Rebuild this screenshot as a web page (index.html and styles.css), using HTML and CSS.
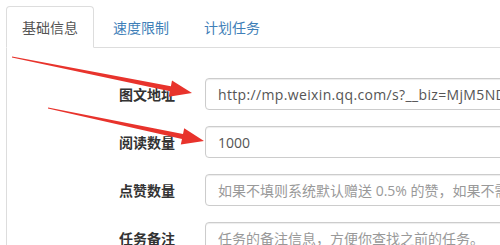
FILE: index.html
```html
<!DOCTYPE html>
<html lang="zh-CN">
<head>
  <meta charset="UTF-8">
  <meta name="viewport" content="width=device-width, initial-scale=1.0">
  <title>添加任务</title>
  <link rel="stylesheet" href="styles.css">
</head>
<body>
  <div class="page">
    <ul class="tabs">
      <li class="tab tab--active"><a href="#">基础信息</a></li>
      <li class="tab"><a href="#">速度限制</a></li>
      <li class="tab"><a href="#">计划任务</a></li>
    </ul>

    <div class="tab-content">
      <form class="form">
        <div class="form-row">
          <label class="form-label">图文地址</label>
          <div class="form-field">
            <input class="form-input form-input--url" type="text" value="http://mp.weixin.qq.com/s?__biz=MjM5NDI2MDk5Mw==&amp;mid=2651">
          </div>
        </div>

        <div class="form-row">
          <label class="form-label">阅读数量</label>
          <div class="form-field">
            <input class="form-input" type="text" value="1000">
          </div>
        </div>

        <div class="form-row">
          <label class="form-label">点赞数量</label>
          <div class="form-field">
            <input class="form-input" type="text" placeholder="如果不填则系统默认赠送 0.5% 的赞，如果不需要请填 0">
          </div>
        </div>

        <div class="form-row">
          <label class="form-label">任务备注</label>
          <div class="form-field">
            <input class="form-input" type="text" placeholder="任务的备注信息，方便你查找之前的任务。">
          </div>
        </div>
      </form>
    </div>

    <!-- Annotation arrows drawn over the form -->
    <svg class="arrows" width="500" height="245" viewBox="0 0 500 245">
      <polygon points="12.1,56.4 170.9,86.2 172,80.6 192,93 168.8,96.8 169.9,91.2 11.9,57.6"/>
      <polygon points="48.1,107.4 183,133.9 184.2,128.3 204,141 180.8,144.5 182,138.9 47.9,108.6"/>
    </svg>
  </div>
</body>
</html>
```

FILE: styles.css
```css
* {
  margin: 0;
  padding: 0;
  box-sizing: border-box;
}

body {
  width: 500px;
  height: 245px;
  overflow: hidden;
  background-color: #fff;
  font-family: "Open Sans", "Noto Sans CJK SC", sans-serif;
  font-size: 14px;
  color: #333;
}

.page {
  position: relative;
  width: 760px;
  padding: 6px 0 0 6px;
}

/* Tabs */
.tabs {
  display: flex;
  list-style: none;
  border-bottom: 1px solid #ddd;
}

.tab {
  margin-right: 3px;
  margin-bottom: -1px;
}

.tab a {
  display: block;
  padding: 10px 15px;
  line-height: 20px;
  border: 1px solid transparent;
  border-radius: 4px 4px 0 0;
  color: #3f7fb8;
  text-decoration: none;
  font-family: "Noto Sans CJK SC", sans-serif;
}

.tab--active a {
  color: #555;
  background-color: #fff;
  border-color: #ddd #ddd transparent;
}

/* Panel */
.tab-content {
  border-left: 1px solid #ddd;
  padding-top: 30px;
  height: 200px;
}

.form-row {
  display: flex;
  align-items: center;
  margin-bottom: 16px;
}

.form-label {
  width: 183px;
  padding-right: 15px;
  text-align: right;
  font-family: "Noto Sans CJK SC", sans-serif;
  font-weight: bold;
  font-size: 14px;
  color: #333;
}

.form-field {
  flex: 1;
  padding-left: 15px;
}

.form-input {
  display: block;
  width: 100%;
  height: 32px;
  padding: 6px 12px;
  border: 1px solid #ccc;
  border-radius: 4px;
  box-shadow: inset 0 1px 1px rgba(0, 0, 0, 0.075);
  font-family: "Open Sans", "Noto Sans CJK SC", sans-serif;
  font-size: 14px;
  color: #555;
  background-color: #fff;
}

.form-input--url {
  letter-spacing: 0.35px;
}

.form-input::placeholder {
  color: #999;
}

.arrows {
  position: absolute;
  top: 0;
  left: 0;
  fill: #e8332c;
  pointer-events: none;
}
```
